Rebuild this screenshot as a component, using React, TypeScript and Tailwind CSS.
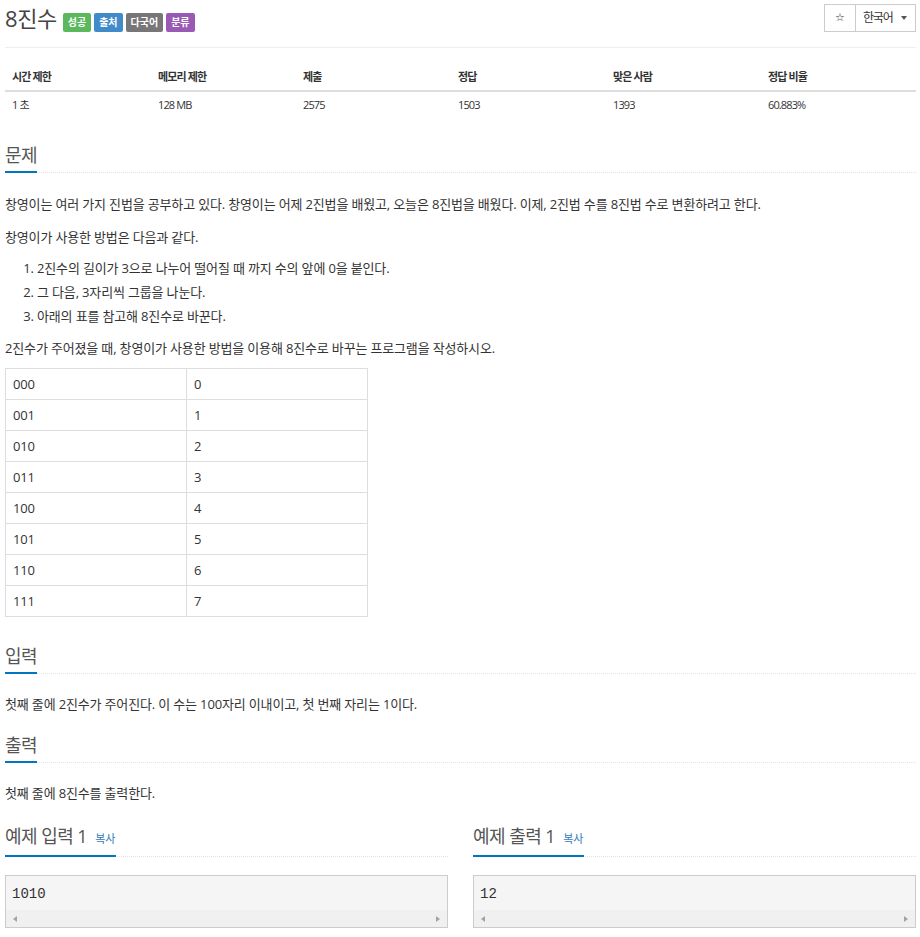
import * as React from "react";

const stats = [
  { label: "시간 제한", value: "1 초", w: "w-[146px]" },
  { label: "메모리 제한", value: "128 MB", w: "w-[145px]" },
  { label: "제출", value: "2575", w: "w-[155px]" },
  { label: "정답", value: "1503", w: "w-[155px]" },
  { label: "맞은 사람", value: "1393", w: "w-[155px]" },
  { label: "정답 비율", value: "60.883%", w: "" },
];

const octalRows = [
  ["000", "0"],
  ["001", "1"],
  ["010", "2"],
  ["011", "3"],
  ["100", "4"],
  ["101", "5"],
  ["110", "6"],
  ["111", "7"],
];

const SectionTitle: React.FC<{ children: React.ReactNode }> = ({ children }) => (
  <div className="flex border-b border-dotted border-[#e3e3e3]">
    <h2 className="-mb-px border-b-2 border-[#0076c0] pb-[3px] text-[18px] leading-[26px] tracking-[-0.03em] text-[#555] font-normal">
      {children}
    </h2>
  </div>
);

const SampleBox: React.FC<{ title: string; data: string }> = ({ title, data }) => (
  <div>
    <SectionTitle>
      {title}{" "}
      <a className="ml-[4px] text-[11px] tracking-normal text-[#337ab7]">복사</a>
    </SectionTitle>
    <div className="mt-[18px] border border-[#ccc] bg-[#f5f5f5]">
      <pre className="px-[6px] pt-[8px] pb-[6px] font-['Liberation_Mono',monospace] text-[14px] leading-[20px] text-[#333]">
        {data}
      </pre>
      <div className="flex h-[17px] items-center justify-between bg-[#f0f0f0] px-[7px]">
        <span className="h-0 w-0 border-y-[3px] border-r-[4px] border-y-transparent border-r-[#a3a3a3]" />
        <span className="h-0 w-0 border-y-[3px] border-l-[4px] border-y-transparent border-l-[#a3a3a3]" />
      </div>
    </div>
  </div>
);

export default function App() {
  return (
    <div className="min-h-screen bg-white pl-[5px] pr-[4px] font-['Open_Sans','Noto_Sans_CJK_KR',sans-serif] text-[#333]">
      {/* Title row */}
      <div className="flex items-start justify-between pt-[4px]">
        <div className="flex items-start">
          <h1 className="text-[22px] leading-[28px] tracking-[-0.02em] font-normal text-[#444]">8진수</h1>
          <div className="ml-[6px] mt-[9px] flex gap-[3px] text-[10px] font-bold leading-[19px] text-white">
            <span className="h-[19px] rounded-[2px] bg-[#5cb85c] px-[5px]">성공</span>
            <span className="h-[19px] rounded-[2px] bg-[#428bca] px-[5px]">출처</span>
            <span className="h-[19px] rounded-[2px] bg-[#777] px-[5px]">다국어</span>
            <span className="h-[19px] rounded-[2px] bg-[#9b59b6] px-[5px]">분류</span>
          </div>
        </div>
        <div className="flex h-[28px]">
          <button className="flex w-[32px] items-center justify-center border border-[#ccc] bg-white font-['DejaVu_Sans',sans-serif] text-[11px] text-[#333]">
            ☆
          </button>
          <button className="-ml-px flex w-[61px] items-center gap-[8px] border border-[#ccc] bg-white pl-[7px] text-[12px] tracking-[-0.1em] text-[#333]">
            한국어
            <span className="h-0 w-0 border-x-[3px] border-t-[4px] border-x-transparent border-t-[#555]" />
          </button>
        </div>
      </div>

      <hr className="mt-[15px] border-[#eee]" />

      {/* Stats table */}
      <table className="mt-[16px] w-full table-fixed border-collapse text-left text-[11px] tracking-[-0.08em]">
        <thead>
          <tr className="border-b-2 border-[#ddd]">
            {stats.map((s) => (
              <th key={s.label} className={`${s.w} h-[27px] pl-[7px] font-bold`}>
                {s.label}
              </th>
            ))}
          </tr>
        </thead>
        <tbody>
          <tr>
            {stats.map((s) => (
              <td key={s.label} className="h-[28px] pl-[7px] font-normal">
                {s.value}
              </td>
            ))}
          </tr>
        </tbody>
      </table>

      {/* 문제 */}
      <section className="mt-[23px]">
        <SectionTitle>문제</SectionTitle>
        <div className="mt-[19px] text-[13px] leading-[24px] tracking-[-0.012em]">
          <p>
            창영이는 여러 가지 진법을 공부하고 있다. 창영이는 어제 2진법을 배웠고, 오늘은 8진법을 배웠다. 이제, 2진법 수를 8진법 수로 변환하려고 한다.
          </p>
          <p className="mt-[9px]">창영이가 사용한 방법은 다음과 같다.</p>
          <ol className="mt-[7px] list-decimal pl-[32px]">
            <li>2진수의 길이가 3으로 나누어 떨어질 때 까지 수의 앞에 0을 붙인다.</li>
            <li>그 다음, 3자리씩 그룹을 나눈다.</li>
            <li>아래의 표를 참고해 8진수로 바꾼다.</li>
          </ol>
          <p className="mt-[8px]">2진수가 주어졌을 때, 창영이가 사용한 방법을 이용해 8진수로 바꾸는 프로그램을 작성하시오.</p>
          <table className="mt-[8px] w-[363px] table-fixed border-collapse border border-[#ddd]">
            <tbody>
              {octalRows.map(([bin, oct]) => (
                <tr key={bin}>
                  <td className="w-[181px] border border-[#ddd] px-[7px] py-[3px] leading-[24px]">{bin}</td>
                  <td className="border border-[#ddd] px-[7px] py-[3px] leading-[24px]">{oct}</td>
                </tr>
              ))}
            </tbody>
          </table>
        </div>
      </section>

      {/* 입력 */}
      <section className="mt-[26px]">
        <SectionTitle>입력</SectionTitle>
        <p className="mt-[18px] text-[13px] leading-[24px] tracking-[-0.012em]">
          첫째 줄에 2진수가 주어진다. 이 수는 100자리 이내이고, 첫 번째 자리는 1이다.
        </p>
      </section>

      {/* 출력 */}
      <section className="mt-[16px]">
        <SectionTitle>출력</SectionTitle>
        <p className="mt-[18px] text-[13px] leading-[24px] tracking-[-0.012em]">첫째 줄에 8진수를 출력한다.</p>
      </section>

      {/* 예제 */}
      <div className="mt-[18px] grid grid-cols-2 gap-[25px]">
        <SampleBox title="예제 입력 1" data="1010" />
        <SampleBox title="예제 출력 1" data="12" />
      </div>
    </div>
  );
}
